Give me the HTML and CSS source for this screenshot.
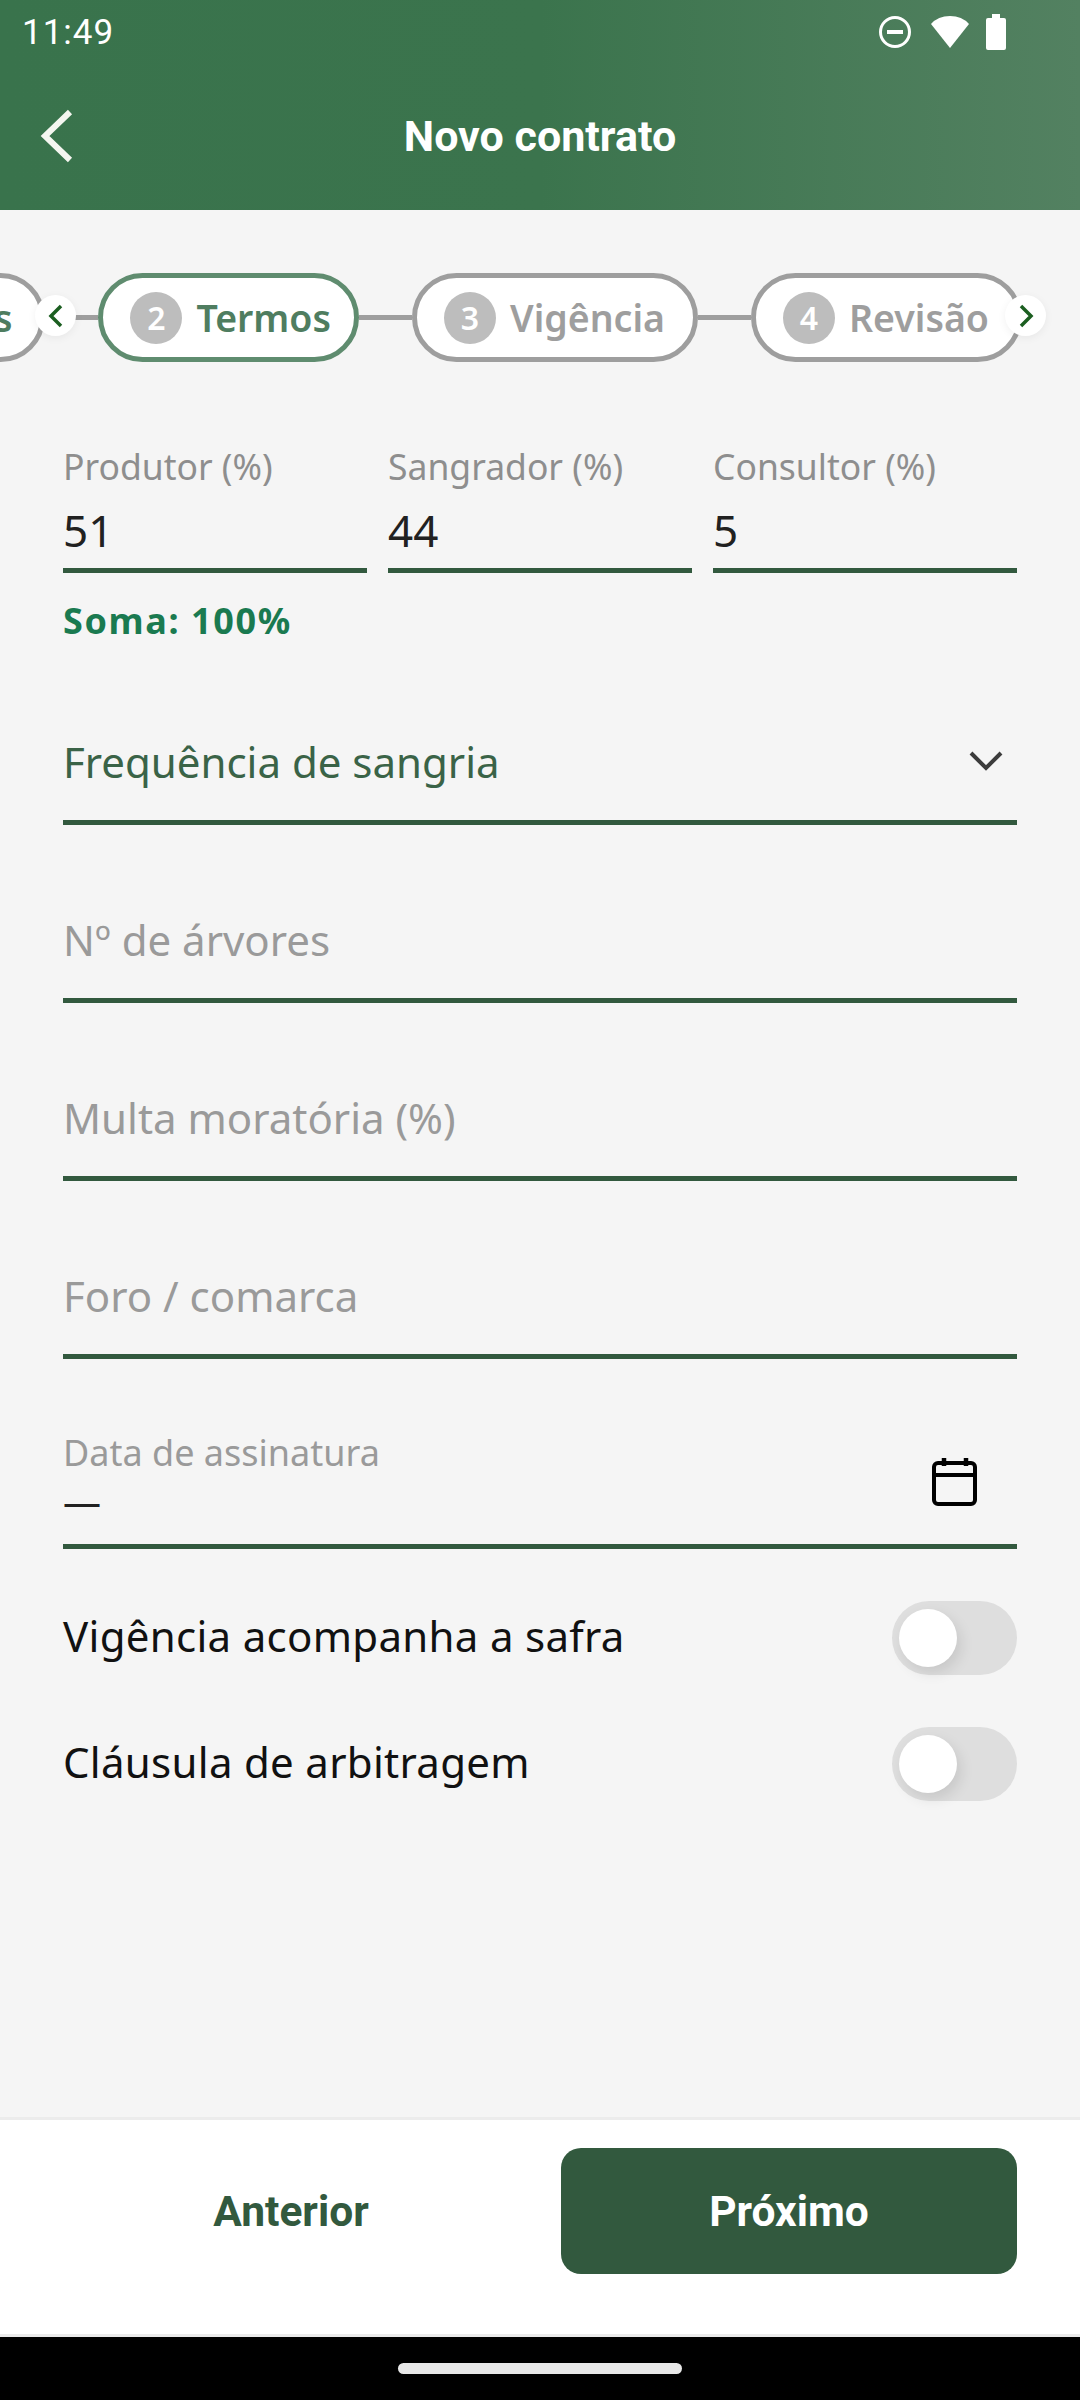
FILE: index.html
```html
<!DOCTYPE html>
<html lang="pt-BR">
<head>
  <meta charset="UTF-8">
  <meta name="viewport" content="width=device-width, initial-scale=1.0">
  <title>Novo contrato</title>
  <link rel="stylesheet" href="styles.css">
</head>
<body>
  <div class="app">
    <header class="header">
      <div class="status">
        <span class="time">11:49</span>
        <div class="status-icons">
          <svg width="34" height="34" viewBox="0 0 34 34"><circle cx="17" cy="17" r="14.5" fill="none" stroke="#fff" stroke-width="3"/><rect x="9" y="15" width="16" height="4" fill="#fff"/></svg>
          <svg width="40" height="34" viewBox="0 0 40 34"><path d="M20 33 L1 9 Q8 1 20 1 Q32 1 39 9 Z" fill="#fff"/></svg>
          <svg class="battery" width="20" height="36" viewBox="0 0 20 36"><path d="M6 0h8v4h4q2 0 2 2v28q0 2-2 2H2q-2 0-2-2V6q0-2 2-2h4z" fill="#fff"/></svg>
        </div>
      </div>
      <div class="toolbar">
        <svg class="back" width="36" height="56" viewBox="0 0 36 56"><path d="M32 4 L7 28 L32 52" fill="none" stroke="#f4f6f0" stroke-width="6"/></svg>
        <h1 class="title">Novo contrato</h1>
        <span class="toolbar-space"></span>
      </div>
    </header>

    <main class="content">
      <div class="stepper">
        <div class="steps">
          <div class="step"><span class="num">1</span><span class="step-name step-done">Partes</span></div>
          <span class="link"></span>
          <div class="step step-on"><span class="num">2</span><span class="step-name">Termos</span></div>
          <span class="link"></span>
          <div class="step"><span class="num">3</span><span class="step-name">Vigência</span></div>
          <span class="link"></span>
          <div class="step"><span class="num">4</span><span class="step-name">Revisão</span></div>
        </div>
        <span class="arrow arrow-left"><svg width="16" height="24" viewBox="0 0 16 24"><path d="M13 2 L3 12 L13 22" fill="none" stroke="#1b5e20" stroke-width="3.5"/></svg></span>
        <span class="arrow arrow-right"><svg width="16" height="24" viewBox="0 0 16 24"><path d="M3 2 L13 12 L3 22" fill="none" stroke="#1b5e20" stroke-width="3.5"/></svg></span>
      </div>

      <div class="form">
        <div class="split">
          <div class="split-field"><label class="split-label">Produtor (%)</label><div class="split-value">51</div></div>
          <div class="split-field"><label class="split-label">Sangrador (%)</label><div class="split-value">44</div></div>
          <div class="split-field"><label class="split-label">Consultor (%)</label><div class="split-value">5</div></div>
        </div>
        <p class="sum">Soma: 100%</p>

        <div class="field field-select">
          <span class="select-text">Frequência de sangria</span>
          <svg width="34" height="22" viewBox="0 0 34 22"><path d="M2 3 L17 18 L32 3" fill="none" stroke="#3c3c3c" stroke-width="4"/></svg>
        </div>
        <div class="field"><span class="hint">Nº de árvores</span></div>
        <div class="field"><span class="hint">Multa moratória (%)</span></div>
        <div class="field"><span class="hint">Foro / comarca</span></div>

        <div class="field field-date">
          <div>
            <div class="date-label">Data de assinatura</div>
            <div class="date-value">—</div>
          </div>
          <svg class="calendar" width="46" height="50" viewBox="0 0 46 50"><path d="M13 1v8M35 1v8" stroke="#000" stroke-width="4.5" fill="none"/><rect x="3" y="6" width="41" height="41" rx="4" fill="none" stroke="#000" stroke-width="4"/><path d="M3 18h41" stroke="#000" stroke-width="4"/></svg>
        </div>

        <div class="toggle-row toggle-first">
          <span class="toggle-text">Vigência acompanha a safra</span>
          <span class="toggle"><span class="thumb"></span></span>
        </div>
        <div class="toggle-row">
          <span class="toggle-text">Cláusula de arbitragem</span>
          <span class="toggle"><span class="thumb"></span></span>
        </div>
      </div>
    </main>

    <footer class="footer">
      <button class="btn btn-plain">Anterior</button>
      <button class="btn btn-main">Próximo</button>
    </footer>
    <div class="navbar"><span class="home"></span></div>
  </div>
</body>
</html>
```

FILE: styles.css
```css
* {
  margin: 0;
  padding: 0;
  box-sizing: border-box;
}

body {
  width: 1080px;
  height: 2400px;
  overflow: hidden;
  background-color: #f5f5f5;
  font-family: "Noto Sans", "Lato", sans-serif;
}

.app {
  display: flex;
  flex-direction: column;
  height: 2400px;
}

.header {
  height: 210px;
  color: #fff;
  background-image: linear-gradient(to right, #39734c 0%, #3b744d 50%, #538161 100%);
}

.status {
  display: flex;
  justify-content: space-between;
  align-items: center;
  height: 63px;
  padding: 2px 74px 0 22px;
}

.time {
  font-family: "Roboto", sans-serif;
  font-size: 35px;
  letter-spacing: 1px;
}

.status-icons {
  display: flex;
  align-items: center;
  gap: 18px;
  margin-top: -2px;
}

.battery {
  margin-left: -2px;
}

.toolbar {
  display: flex;
  align-items: center;
  height: 147px;
  padding: 0 38px 2px;
}

.toolbar-space {
  width: 36px;
}

.title {
  flex: 1;
  font-family: "Roboto", sans-serif;
  font-size: 43px;
  font-weight: 700;
  text-align: center;
}

.content {
  flex: 1;
}

.stepper {
  position: relative;
  margin-top: 63px;
}

.steps {
  display: flex;
  justify-content: flex-end;
  align-items: center;
  height: 89px;
  padding-right: 58px;
  overflow: hidden;
}

.step {
  display: flex;
  flex-shrink: 0;
  align-items: center;
  gap: 14px;
  height: 89px;
  padding: 0 28px 0 27px;
  color: #9e9e9e;
  background-color: #fff;
  border: 5px solid #9e9e9e;
  border-radius: 45px;
}

.step-on {
  padding-right: 23px;
  color: #4f7d60;
  border-color: #5f8c6f;
}

.step-done {
  color: #4f7d60;
}

.num {
  display: flex;
  justify-content: center;
  align-items: center;
  width: 52px;
  height: 52px;
  color: #fff;
  font-size: 32px;
  font-weight: 600;
  background-color: #bdbdbd;
  border-radius: 50%;
}

.step-name {
  font-size: 37.5px;
  font-weight: 600;
}

.link {
  flex-shrink: 0;
  width: 53px;
  height: 5px;
  background-color: #9e9e9e;
}

.arrow {
  position: absolute;
  top: 22px;
  display: flex;
  justify-content: center;
  align-items: center;
  width: 41px;
  height: 41px;
  background-color: #fff;
  border-radius: 50%;
  box-shadow: 0 2px 8px rgba(0, 0, 0, .06);
}

.arrow-left {
  left: 35px;
}

.arrow-right {
  left: 1005px;
}

.form {
  padding: 84px 63px 0;
}

.split {
  display: flex;
  gap: 21px;
}

.split-field {
  flex: 1;
  height: 127px;
  border-bottom: 5px solid #32593e;
}

.split-label {
  display: block;
  height: 40px;
  color: #8e8e8e;
  font-size: 35.5px;
  line-height: 40px;
}

.split-value {
  height: 82px;
  color: #212121;
  font-size: 44px;
  line-height: 88px;
}

.sum {
  margin-top: 28px;
  color: #1a7a50;
  font-size: 36px;
  font-weight: 700;
  line-height: 40px;
  letter-spacing: 1.6px;
}

.field {
  display: flex;
  justify-content: space-between;
  align-items: center;
  height: 101px;
  margin-top: 77px;
  padding-bottom: 22px;
  border-bottom: 5px solid #32593e;
}

.field-select {
  margin-top: 83px;
  padding-right: 14px;
}

.select-text {
  color: #3a6347;
  font-size: 42px;
}

.hint {
  color: #9a9a9a;
  font-size: 42px;
}

.field-date {
  height: 122px;
  margin-top: 68px;
  padding: 0 40px 17px 0;
}

.date-label {
  color: #9a9a9a;
  font-size: 36px;
  line-height: 48px;
}

.date-value {
  color: #212121;
  font-size: 38px;
  line-height: 48px;
}

.calendar {
  margin-top: 9px;
}

.toggle-row {
  display: flex;
  justify-content: space-between;
  align-items: center;
  height: 74px;
  margin-top: 52px;
}

.toggle-text {
  margin-top: -6px;
  color: #111;
  font-size: 42px;
  letter-spacing: .3px;
}

.toggle {
  display: flex;
  align-items: center;
  width: 125px;
  height: 74px;
  padding-left: 7px;
  background-color: #dedede;
  border-radius: 37px;
}

.thumb {
  width: 58px;
  height: 58px;
  background-color: #fff;
  border-radius: 50%;
  box-shadow: 4px 6px 14px rgba(0, 0, 0, .1);
}

.footer {
  display: flex;
  gap: 42px;
  height: 220px;
  padding: 28px 63px 0;
  background-color: #fff;
  border-top: 3px solid #ececec;
  border-bottom: 3px solid #ececec;
}

.btn {
  flex: 1;
  height: 126px;
  font-family: "Roboto", sans-serif;
  font-size: 42.5px;
  font-weight: 700;
  border: none;
  border-radius: 20px;
}

.btn-plain {
  color: #32593e;
  background-color: #fff;
}

.btn-main {
  color: #fff;
  background-color: #32593e;
}

.navbar {
  display: flex;
  justify-content: center;
  align-items: center;
  height: 63px;
  background-color: #000;
}

.home {
  width: 284px;
  height: 11px;
  background-color: #e8e8e8;
  border-radius: 6px;
}
```
